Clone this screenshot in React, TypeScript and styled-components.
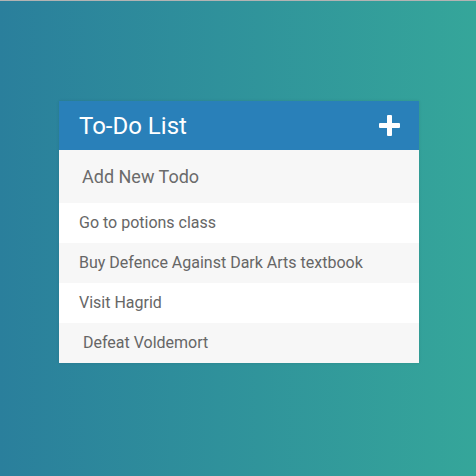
import styled, { createGlobalStyle } from "styled-components";

const GlobalStyle = createGlobalStyle`
  html, body {
    margin: 0;
    padding: 0;
    height: 100%;
  }
  body {
    font-family: Roboto, "Liberation Sans", sans-serif;
    background: linear-gradient(to right, #2a7f9c, #35a69a);
    border-top: 1px solid #b3b3b3;
    box-sizing: border-box;
  }
  #root {
    height: 100%;
  }
`;

const Page = styled.div`
  display: flex;
  justify-content: center;
  padding: 100px 0 0 2px;
`;

const Card = styled.div`
  width: 360px;
  background: #fff;
  box-shadow: 0 0 3px rgba(0, 0, 0, 0.1);
`;

const Header = styled.h1`
  margin: 0;
  height: 49px;
  box-sizing: border-box;
  padding: 0 20px;
  display: flex;
  align-items: center;
  justify-content: space-between;
  background: #2980b9;
  color: #fff;
  font-size: 24px;
  font-weight: 400;
`;

const AddButton = styled.span`
  display: flex;
  width: 21px;
  height: 21px;
  margin-right: -1px;
`;

const NewTodo = styled.input`
  display: block;
  width: 100%;
  height: 53px;
  box-sizing: border-box;
  border: 3px solid transparent;
  padding: 0 20px;
  background: #f7f7f7;
  font-family: Roboto, "Liberation Sans", sans-serif;
  font-size: 18px;
  color: #666;
  outline: none;

  &::placeholder {
    color: #6b6b6b;
  }
`;

const List = styled.ul`
  list-style: none;
  margin: 0;
  padding: 0;
`;

const Item = styled.li<{ $odd: boolean }>`
  height: 40px;
  line-height: 40px;
  padding: 0 20px;
  background: ${(p) => (p.$odd ? "#f7f7f7" : "#fff")};
  color: #666;
  font-size: 16px;
  white-space: pre;
`;

const todos = [
  "Go to potions class",
  "Buy Defence Against Dark Arts textbook",
  "Visit Hagrid",
  " Defeat Voldemort",
];

function PlusIcon() {
  return (
    <svg width="21" height="21" viewBox="0 0 21 21">
      <rect x="8" y="0" width="5" height="21" rx="1" fill="#fff" />
      <rect x="0" y="8" width="21" height="5" rx="1" fill="#fff" />
    </svg>
  );
}

export default function App() {
  return (
    <>
      <GlobalStyle />
      <Page>
        <Card>
          <Header>
            To-Do List
            <AddButton>
              <PlusIcon />
            </AddButton>
          </Header>
          <NewTodo type="text" placeholder="Add New Todo" />
          <List>
            {todos.map((t, i) => (
              <Item key={t} $odd={i % 2 === 1}>
                {t}
              </Item>
            ))}
          </List>
        </Card>
      </Page>
    </>
  );
}
